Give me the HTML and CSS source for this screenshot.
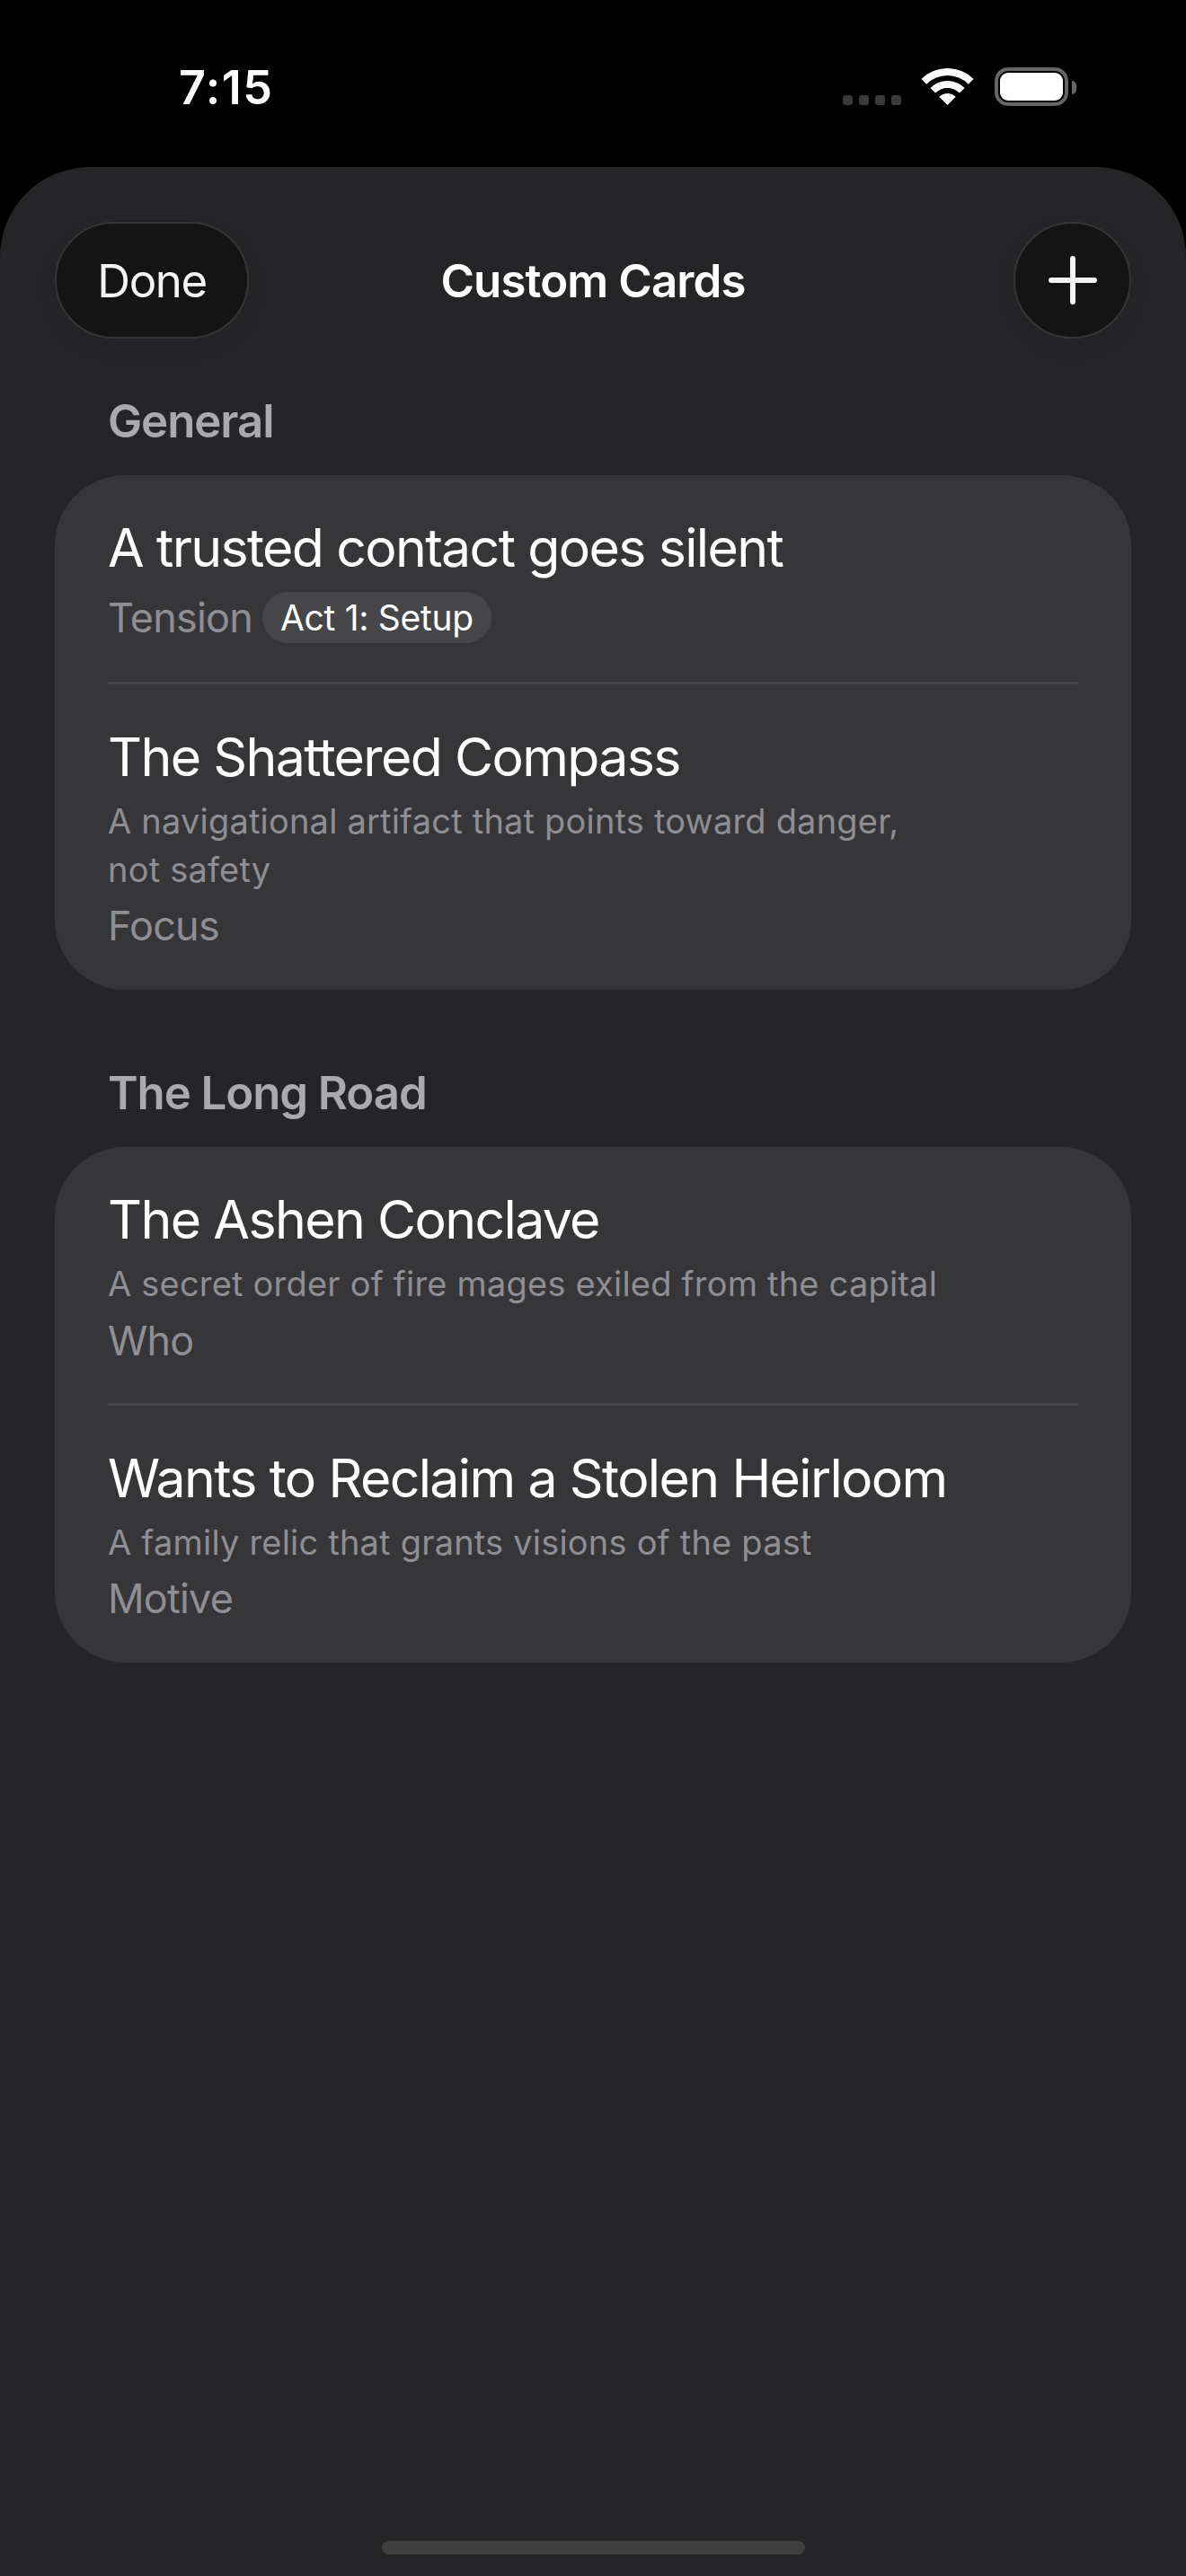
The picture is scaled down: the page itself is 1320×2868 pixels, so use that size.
FILE: index.html
```html
<!DOCTYPE html>
<html lang="en">
<head>
    <meta charset="UTF-8">
    <meta name="viewport" content="width=device-width, initial-scale=1.0">
    <title>Custom Cards</title>
    <link rel="stylesheet" href="styles.css">
</head>
<body>
    <div class="status-bar">
        <span class="clock">7:15</span>
        <div class="status-icons">
            <div class="signal"><i></i><i></i><i></i><i></i></div>
            <svg class="wifi" viewBox="-1 0 59 41" width="59" height="41">
                <path d="M-.5 12A41 41 0 0 1 57.5 12L51.8 17.7A33 33 0 0 0 5.2 17.7Z"/>
                <path d="M9.4 21.9A27 27 0 0 1 47.6 21.9L41.9 27.6A19 19 0 0 0 15.1 27.6Z"/>
                <path d="M19.3 31.8A13 13 0 0 1 37.7 31.8L28.5 41Z"/>
            </svg>
            <div class="battery"><div class="battery-level"></div></div>
            <div class="battery-cap"></div>
        </div>
    </div>

    <div class="sheet">
        <div class="nav">
            <button class="nav-btn done">Done</button>
            <h1>Custom Cards</h1>
            <button class="nav-btn add" aria-label="Add">
                <svg viewBox="0 0 54 54" width="54" height="54">
                    <path d="M27 3V51M3 27H51"/>
                </svg>
            </button>
        </div>

        <h2 class="section-title first">General</h2>
        <div class="card">
            <div class="row has-tag">
                <div class="row-title">A trusted contact goes silent</div>
                <div class="row-meta">
                    <span>Tension</span>
                    <span class="tag">Act 1: Setup</span>
                </div>
            </div>
            <div class="row">
                <div class="row-title">The Shattered Compass</div>
                <div class="row-desc">A navigational artifact that points toward danger,<br>not safety</div>
                <div class="row-meta">Focus</div>
            </div>
        </div>

        <h2 class="section-title">The Long Road</h2>
        <div class="card">
            <div class="row">
                <div class="row-title">The Ashen Conclave</div>
                <div class="row-desc">A secret order of fire mages exiled from the capital</div>
                <div class="row-meta">Who</div>
            </div>
            <div class="row">
                <div class="row-title">Wants to Reclaim a Stolen Heirloom</div>
                <div class="row-desc">A family relic that grants visions of the past</div>
                <div class="row-meta">Motive</div>
            </div>
        </div>

        <div class="home-bar"></div>
    </div>
</body>
</html>
```
FILE: styles.css
```css
* {
    box-sizing: border-box;
}

body {
    font-family: Inter, "Liberation Sans", sans-serif;
    margin: 0;
    width: 1320px;
    height: 2868px;
    background-color: #000;
    color: #fff;
    display: flex;
    flex-direction: column;
    overflow: hidden;
}

/* status bar */
.status-bar {
    height: 186px;
    flex-shrink: 0;
    padding: 72px 122px 0 199px;
    display: flex;
    justify-content: space-between;
    align-items: flex-start;
}

.clock {
    font-size: 52px;
    line-height: 52px;
    font-weight: 600;
    letter-spacing: 1.5px;
}

.status-icons {
    display: flex;
    align-items: flex-start;
    padding-top: 3px;
}

.signal {
    display: flex;
    gap: 7px;
    margin: 31px 22px 0 0;
}

.signal i {
    width: 11px;
    height: 11px;
    border-radius: 3px;
    background-color: #3a3a3a;
}

.wifi {
    fill: #fff;
    margin: 1px 23px 0 0;
}

.battery {
    width: 82px;
    height: 43px;
    padding: 2px;
    border: 4px solid #666;
    border-radius: 15px;
}

.battery-level {
    height: 100%;
    background-color: #fff;
    border-radius: 9px;
}

.battery-cap {
    width: 5px;
    height: 15px;
    margin: 15px 0 0 4px;
    background-color: #666;
    border-radius: 0 8px 8px 0;
}

/* sheet */
.sheet {
    flex: 1;
    background-color: #252527;
    border-radius: 100px 100px 0 0;
    padding: 61px 61px 24px;
    display: flex;
    flex-direction: column;
}

.nav {
    display: grid;
    grid-template-columns: 1fr auto 1fr;
    align-items: center;
}

.nav h1 {
    margin: 0;
    font-size: 51px;
    font-weight: 600;
    letter-spacing: -0.9px;
}

.nav-btn {
    height: 130px;
    padding: 0;
    background-color: #141415;
    color: #f4f4f4;
    border: 2px solid #353537;
    border-radius: 65px;
    box-shadow: 0 10px 30px rgba(0,0,0,0.06);
    font-family: inherit;
    font-size: 51px;
    display: flex;
    align-items: center;
    justify-content: center;
}

.done {
    width: 216px;
    letter-spacing: -1.5px;
}

.add {
    width: 131px;
    justify-self: end;
}

.add svg {
    fill: none;
    stroke: #f2f2f2;
    stroke-width: 6;
    stroke-linecap: round;
}

.section-title {
    margin: 85px 59px 30px;
    font-size: 51px;
    line-height: 60px;
    font-weight: 600;
    letter-spacing: -1.1px;
    color: #a9a9b0;
}

.section-title.first {
    margin-top: 62px;
}

.card {
    background-color: #363638;
    border-radius: 78px;
    padding: 0 59px;
}

.row {
    padding: 41px 0 38px;
}

.row + .row {
    border-top: 3px solid #464648;
    padding-bottom: 40px;
}

.row-title {
    font-size: 59px;
    line-height: 80px;
    letter-spacing: -1.65px;
}

.row-desc {
    margin-top: 5px;
    font-size: 38px;
    line-height: 53.5px;
    letter-spacing: 0.2px;
    color: #8e8e93;
}

.row-meta {
    margin-top: 5px;
    font-size: 45px;
    line-height: 62px;
    letter-spacing: -0.8px;
    color: #8e8e93;
    display: flex;
    align-items: center;
    gap: 11px;
}

.has-tag {
    padding-bottom: 40px;
}

.has-tag .row-meta {
    margin-top: 7px;
}

.tag {
    font-size: 39px;
    line-height: 57px;
    letter-spacing: -0.3px;
    padding: 0 20px;
    border-radius: 29px;
    background-color: #464648;
    color: #fff;
    margin-top: -2px;
}

.home-bar {
    width: 471px;
    height: 15px;
    margin: auto auto 0;
    border-radius: 8px;
    background-color: #404040;
}
```
